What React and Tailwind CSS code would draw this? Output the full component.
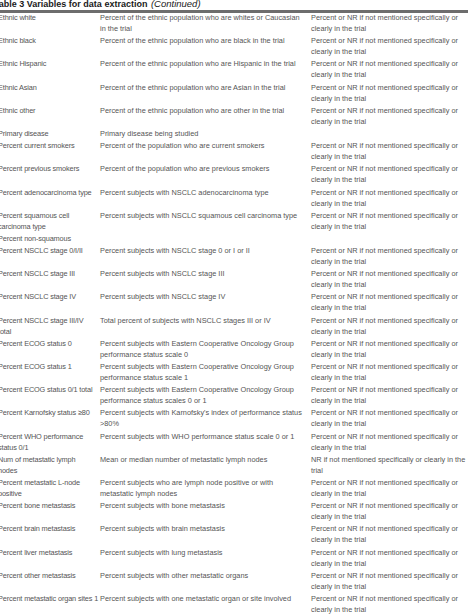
const NR = ['Percent or NR if not mentioned specifically or', 'clearly in the trial']

// Table rows: [variable, description, how recorded], each cell split into lines
const rows = [
  [['Ethnic white'], ['Percent of the ethnic population who are whites or Caucasian', 'in the trial'], NR],
  [['Ethnic black'], ['Percent of the ethnic population who are black in the trial'], NR],
  [['Ethnic Hispanic'], ['Percent of the ethnic population who are Hispanic in the trial'], NR],
  [['Ethnic Asian'], ['Percent of the ethnic population who are Asian in the trial'], NR],
  [['Ethnic other'], ['Percent of the ethnic population who are other in the trial'], NR],
  [['Primary disease'], ['Primary disease being studied'], []],
  [['Percent current smokers'], ['Percent of the population who are current smokers'], NR],
  [['Percent previous smokers'], ['Percent of the population who are previous smokers'], NR],
  [['Percent adenocarcinoma type'], ['Percent subjects with NSCLC adenocarcinoma type'], NR],
  [['Percent squamous cell', 'carcinoma type'], ['Percent subjects with NSCLC squamous cell carcinoma type'], NR],
  [['Percent non-squamous'], [], []],
  [['Percent NSCLC stage 0/I/II'], ['Percent subjects with NSCLC stage 0 or I or II'], NR],
  [['Percent NSCLC stage III'], ['Percent subjects with NSCLC stage III'], NR],
  [['Percent NSCLC stage IV'], ['Percent subjects with NSCLC stage IV'], NR],
  [['Percent NSCLC stage III/IV', 'total'], ['Total percent of subjects with NSCLC stages III or IV'], NR],
  [['Percent ECOG status 0'], ['Percent subjects with Eastern Cooperative Oncology Group', 'performance status scale 0'], NR],
  [['Percent ECOG status 1'], ['Percent subjects with Eastern Cooperative Oncology Group', 'performance status scale 1'], NR],
  [['Percent ECOG status 0/1 total'], ['Percent subjects with Eastern Cooperative Oncology Group', 'performance status scales 0 or 1'], NR],
  [['Percent Karnofsky status ≥80'], ["Percent subjects with Karnofsky's index of performance status", '>80%'], NR],
  [['Percent WHO performance', 'status 0/1'], ['Percent subjects with WHO performance status scale 0 or 1'], NR],
  [['Num of metastatic lymph', 'nodes'], ['Mean or median number of metastatic lymph nodes'], ['NR if not mentioned specifically or clearly in the', 'trial']],
  [['Percent metastatic L-node', 'positive'], ['Percent subjects who are lymph node positive or with', 'metastatic lymph nodes'], NR],
  [['Percent bone metastasis'], ['Percent subjects with bone metastasis'], NR],
  [['Percent brain metastasis'], ['Percent subjects with brain metastasis'], NR],
  [['Percent liver metastasis'], ['Percent subjects with lung metastasis'], NR],
  [['Percent other metastasis'], ['Percent subjects with other metastatic organs'], NR],
  [['Percent metastatic organ sites 1'], ['Percent subjects with one metastatic organ or site involved'], NR],
]

function Cell({ lines, className = '' }) {
  return (
    <div className={className}>
      {lines.map((l, i) => (
        <div key={i} className="whitespace-nowrap">{l}</div>
      ))}
    </div>
  )
}

export default function App() {
  return (
    <div className="w-[468px] h-[614px] overflow-hidden bg-white font-['Liberation_Sans',Arial,sans-serif]">
      <div className="ml-[-6px] mt-[-2px] text-[9px] leading-[11px] text-[#1a1a1a] whitespace-nowrap">
        <span className="font-bold">Table 3 Variables for data extraction</span>{' '}
        <span className="italic ml-[1px] text-[9.5px]">(Continued)</span>
      </div>
      <div className="h-[3px] bg-[#6d6d6d]" />

      <div className="ml-[-2px] mt-[-1px] text-[7.35px] leading-[11px] text-[#555]">
        {rows.map((r, i) => (
          <div key={i} className="grid grid-cols-[102px_211px_1fr] pb-[1.2px]">
            <Cell lines={r[0]} className="tracking-[-0.15px]" />
            <Cell lines={r[1]} />
            <Cell lines={r[2]} />
          </div>
        ))}
      </div>
    </div>
  )
}
